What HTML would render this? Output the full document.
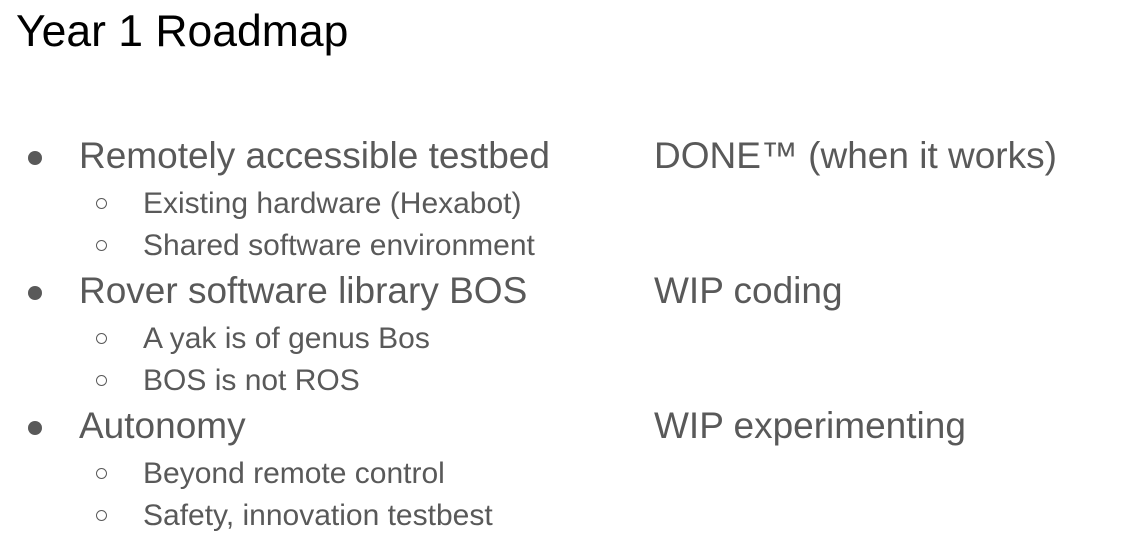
<!DOCTYPE html>
<html><head><style>
body{margin:0;width:1134px;height:543px;background:#fff;overflow:hidden;position:relative;font-family:"Liberation Sans",sans-serif;}
div{position:absolute;line-height:1;white-space:nowrap;}
.t{font-size:44.5px;color:#000;left:16px;top:10px;}
.m{font-size:37px;color:#595959;left:79px;}
.r{font-size:37px;color:#595959;left:654px;}
.s{font-size:30px;color:#595959;left:143px;}
.b{width:14px;height:14px;border-radius:50%;background:#595959;left:28px;}
.c{width:9px;height:9px;border-radius:50%;border:1.5px solid #595959;left:96px;}
</style></head><body>
<div class="t">Year 1 Roadmap</div>

<div class="b" style="top:151px"></div>
<div class="m" style="top:137px">Remotely accessible testbed</div>
<div class="r" style="top:137px">DONE™ (when it works)</div>
<div class="c" style="top:198px"></div>
<div class="s" style="top:189px">Existing hardware (Hexabot)</div>
<div class="c" style="top:240px"></div>
<div class="s" style="top:231px">Shared software environment</div>

<div class="b" style="top:286px"></div>
<div class="m" style="top:272px">Rover software library BOS</div>
<div class="r" style="top:272px">WIP coding</div>
<div class="c" style="top:333px"></div>
<div class="s" style="top:324px">A yak is of genus Bos</div>
<div class="c" style="top:375px"></div>
<div class="s" style="top:366px">BOS is not ROS</div>

<div class="b" style="top:421px"></div>
<div class="m" style="top:407px">Autonomy</div>
<div class="r" style="top:407px">WIP experimenting</div>
<div class="c" style="top:468px"></div>
<div class="s" style="top:459px">Beyond remote control</div>
<div class="c" style="top:510px"></div>
<div class="s" style="top:501px">Safety, innovation testbest</div>
</body></html>
